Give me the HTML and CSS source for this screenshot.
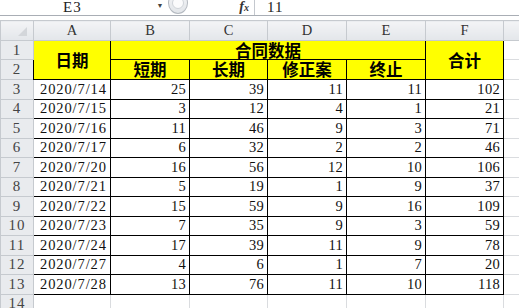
FILE: index.html
```html
<!DOCTYPE html>
<html lang="zh-CN">
<head>
    <meta charset="UTF-8">
    <title>合同数据</title>
    <link rel="stylesheet" href="styles.css">
</head>
<body>
    <div class="fbar">
        <div class="namebox">E3</div>
        <div class="drop">&#9660;</div>
        <div class="knob"><span></span></div>
        <div class="fx">f<small>x</small></div>
        <div class="value">11</div>
    </div>
    <div class="strip"></div>

    <table class="sheet">
        <colgroup>
            <col class="c-row">
            <col class="c-a">
            <col class="c-b">
            <col class="c-c">
            <col class="c-d">
            <col class="c-e">
            <col class="c-f">
            <col class="c-g">
        </colgroup>
        <tr class="colhdr">
            <th class="corner"><i></i></th>
            <th>A</th><th>B</th><th>C</th><th>D</th><th>E</th><th>F</th><th></th>
        </tr>
        <tr class="r-top">
            <th class="rowhdr">1</th>
            <td class="head" rowspan="2">日期</td>
            <td class="head" colspan="4">合同数据</td>
            <td class="head" rowspan="2">合计</td>
            <td class="grid"></td>
        </tr>
        <tr class="r-top">
            <th class="rowhdr">2</th>
            <td class="head sub">短期</td>
            <td class="head sub">长期</td>
            <td class="head sub">修正案</td>
            <td class="head sub">终止</td>
            <td class="grid"></td>
        </tr>
    </table>

    <script>
        // rows of the sheet: date, 短期, 长期, 修正案, 终止, 合计
        const rows = [
            ["2020/7/14", 25, 39, 11, 11, 102],
            ["2020/7/15", 3, 12, 4, 1, 21],
            ["2020/7/16", 11, 46, 9, 3, 71],
            ["2020/7/17", 6, 32, 2, 2, 46],
            ["2020/7/20", 16, 56, 12, 10, 106],
            ["2020/7/21", 5, 19, 1, 9, 37],
            ["2020/7/22", 15, 59, 9, 16, 109],
            ["2020/7/23", 7, 35, 9, 3, 59],
            ["2020/7/24", 17, 39, 11, 9, 78],
            ["2020/7/27", 4, 6, 1, 7, 20],
            ["2020/7/28", 13, 76, 11, 10, 118]
        ];

        const sheet = document.querySelector(".sheet");

        rows.forEach((row, i) => {
            const tr = document.createElement("tr");
            tr.className = "r-data";
            let html = `<th class="rowhdr">${i + 3}</th><td class="date">${row[0]}</td>`;
            for (let k = 1; k < row.length; k++) {
                html += `<td class="num">${row[k]}</td>`;
            }
            html += `<td class="grid"></td>`;
            tr.innerHTML = html;
            sheet.appendChild(tr);
        });

        // empty row 14 below the table
        const last = document.createElement("tr");
        last.className = "r-data";
        last.innerHTML = `<th class="rowhdr">14</th>` + `<td class="grid"></td>`.repeat(7);
        sheet.appendChild(last);
    </script>
</body>
</html>
```

FILE: styles.css
```css
body {
    margin: 0;
    width: 519px;
    height: 308px;
    overflow: hidden;
    background-color: #fff;
    font-family: "Liberation Serif", serif;
}

/* formula bar */
.fbar {
    display: flex;
    height: 15px;
    border-bottom: 1px solid #a9aeb5;
    font-size: 15px;
    line-height: 14px;
    color: #222;
    overflow: hidden;
}

.namebox {
    width: 152px;
    padding-left: 63px;
    box-sizing: border-box;
    letter-spacing: 1px;
}

.drop {
    width: 16px;
    font-size: 7px;
    line-height: 12px;
    text-align: center;
    color: #444;
}

.knob {
    width: 20px;
    height: 22px;
    margin-top: -8px;
    border: 1px solid #b4b9c0;
    border-radius: 50%;
    box-sizing: border-box;
    background: linear-gradient(#f4f5f7, #e2e5e9);
    display: flex;
    align-items: center;
    justify-content: center;
}

.knob span {
    width: 10px;
    height: 10px;
    border-radius: 50%;
    background: #fbfbfc;
    border: 1px solid #d0d4d9;
}

.fx {
    width: 67px;
    padding-right: 5px;
    box-sizing: border-box;
    text-align: right;
    font-style: italic;
    font-weight: bold;
    font-size: 14px;
    color: #333;
    border-right: 1px solid #c4c8ce;
}

.fx small {
    font-size: 10px;
}

.value {
    padding-left: 12px;
    letter-spacing: 1px;
}

.strip {
    height: 4px;
}

/* sheet */
.sheet {
    border-collapse: collapse;
    table-layout: fixed;
    width: 543px;
    font-size: 14.5px;
    color: #111;
}

.c-row { width: 33px; }
.c-a { width: 77px; }
.c-b { width: 79px; }
.c-c { width: 78px; }
.c-d { width: 79px; }
.c-e { width: 79px; }
.c-f { width: 78px; }
.c-g { width: 40px; }

th, td {
    padding: 0;
    white-space: nowrap;
}

.colhdr {
    height: 20px;
}

.colhdr th {
    background: linear-gradient(#f3f4f6, #e3e6ea);
    border: 1px solid #c6cacf;
    font-weight: normal;
    color: #333;
    text-align: center;
}

.corner {
    position: relative;
}

.corner i {
    position: absolute;
    right: 6px;
    bottom: 4px;
    width: 0;
    height: 0;
    border-left: 9px solid transparent;
    border-bottom: 9px solid #d3d6da;
}

.rowhdr {
    background-color: #e9ebee;
    border: 1px solid #c6cacf;
    font-weight: normal;
    color: #444;
    text-align: center;
    font-size: 15px;
    letter-spacing: 1px;
}

.r-top {
    height: 19px;
}

.r-top:nth-child(3) {
    height: 20px;
}

.r-data {
    height: 19.5px;
}

.head {
    background-color: #ffff00;
    border: 1px solid #000;
    text-align: center;
    font-family: "Noto Sans CJK SC", sans-serif;
    font-weight: bold;
    font-size: 16.5px;
    line-height: 17px;
    color: #000;
}

.date {
    border: 1px solid #000;
    padding-left: 6px;
    letter-spacing: 0.9px;
}

.num {
    border: 1px solid #000;
    text-align: right;
    padding-right: 3px;
    letter-spacing: 0.3px;
}

.grid {
    border: 1px solid #dadcdf;
}
```
